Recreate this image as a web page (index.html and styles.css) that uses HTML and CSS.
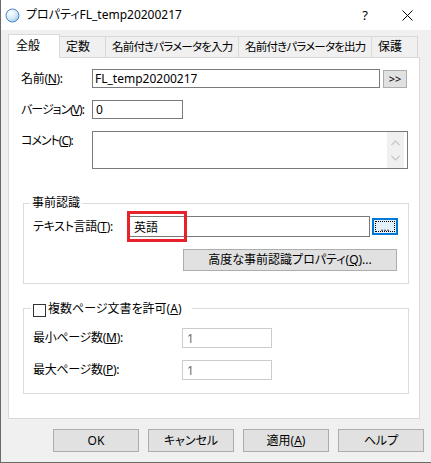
FILE: index.html
```html
<!DOCTYPE html>
<html lang="ja">
<head>
    <meta charset="UTF-8">
    <title>プロパティFL_temp20200217</title>
    <link rel="stylesheet" href="styles.css">
</head>
<body>
    <div class="window">
        <div class="titlebar">
            <svg class="app-icon" width="15" height="15" viewBox="0 0 15 15">
                <defs>
                    <radialGradient id="orb" cx="0.35" cy="0.3" r="0.75">
                        <stop offset="0" stop-color="#ffffff"/>
                        <stop offset="0.6" stop-color="#d6e9f8"/>
                        <stop offset="1" stop-color="#9cc8ee"/>
                    </radialGradient>
                </defs>
                <circle cx="7.5" cy="7.5" r="6.5" fill="url(#orb)" stroke="#4a86c8" stroke-width="1"/>
            </svg>
            <span class="title">プロパティFL_temp20200217</span>
            <span class="caption-btn help">?</span>
            <span class="caption-btn close">
                <svg width="11" height="11" viewBox="0 0 11 11">
                    <path d="M0.5 0.5 L10.5 10.5 M10.5 0.5 L0.5 10.5" stroke="#000" stroke-width="1" fill="none"/>
                </svg>
            </span>
        </div>

        <div class="tabs">
            <div class="tab active" style="width: 52px">全般</div>
            <div class="tab" style="width: 47px">定数</div>
            <div class="tab long" style="width: 134px">名前付きパラメータを入力</div>
            <div class="tab long" style="width: 134px">名前付きパラメータを出力</div>
            <div class="tab" style="width: 47px">保護</div>
        </div>

        <div class="panel">
            <div class="form">
                <div class="row">
                    <label class="label">名前(<u>N</u>):</label>
                    <input class="field name-field" type="text" value="FL_temp20200217" readonly>
                    <button class="btn more-btn">&gt;&gt;</button>
                </div>
                <div class="row">
                    <label class="label narrow">バージョン(<u>V</u>):</label>
                    <input class="field version-field" type="text" value="0" readonly>
                </div>
                <div class="row top">
                    <label class="label comment-label narrow">コメント(<u>C</u>):</label>
                    <div class="field comment-field">
                        <div class="scrollbar">
                            <svg width="9" height="6" viewBox="0 0 9 6"><path d="M0.5 5 L4.5 1 L8.5 5" stroke="#c4c4c4" stroke-width="1.2" fill="none"/></svg>
                            <svg width="9" height="6" viewBox="0 0 9 6"><path d="M0.5 1 L4.5 5 L8.5 1" stroke="#c4c4c4" stroke-width="1.2" fill="none"/></svg>
                        </div>
                    </div>
                </div>
            </div>

            <fieldset class="group recog">
                <legend class="legend">事前認識</legend>
                <div class="row">
                    <label class="label lang-label">テキスト言語(<u>T</u>):</label>
                    <div class="lang-wrap">
                        <input class="field lang-field" type="text" value="英語" readonly>
                        <span class="highlight"></span>
                    </div>
                    <button class="btn dots-btn"><span class="focus-rect">...</span></button>
                </div>
                <button class="btn advanced-btn">高度な事前認識プロパティ(<u>Q</u>)...</button>
            </fieldset>

            <fieldset class="group pages">
                <legend class="legend check-legend">
                    <span class="checkbox"></span>
                    <span>複数ページ文書を許可(<u>A</u>)</span>
                </legend>
                <div class="row">
                    <label class="label page-label">最小ページ数(<u>M</u>):</label>
                    <input class="field page-field" type="text" value="1" disabled>
                </div>
                <div class="row">
                    <label class="label page-label">最大ページ数(<u>P</u>):</label>
                    <input class="field page-field" type="text" value="1" disabled>
                </div>
            </fieldset>
        </div>

        <div class="dialog-buttons">
            <button class="btn dialog-btn">OK</button>
            <button class="btn dialog-btn">キャンセル</button>
            <button class="btn dialog-btn">適用(<u>A</u>)</button>
            <button class="btn dialog-btn">ヘルプ</button>
        </div>
    </div>
</body>
</html>
```

FILE: styles.css
```css
body {
    margin: 0;
    background: #f0f0f0;
    font-family: "Noto Sans", "Noto Sans CJK JP", sans-serif;
    font-size: 12px;
    line-height: 16px;
    color: #000;
    font-feature-settings: "palt";
}
.window {
    width: 431px;
    height: 463px;
    box-sizing: border-box;
    border-left: 1px solid #6b6b6b;
    border-bottom: 1px solid #6b6b6b;
    display: flex;
    flex-direction: column;
}
.titlebar {
    height: 30px;
    background: #fff;
    display: flex;
    align-items: center;
    padding-left: 4px;
}
.app-icon {
    flex: none;
}
.title {
    margin-left: 6px;
}
.caption-btn {
    width: 42px;
    height: 30px;
    display: flex;
    align-items: center;
    justify-content: center;
}
.help {
    margin-left: auto;
    font-size: 13px;
}
.close {
    margin-right: 3px;
}
.tabs {
    display: flex;
    align-items: flex-end;
    height: 23px;
    margin-top: 4px;
    padding-left: 7px;
    position: relative;
    z-index: 1;
}
.tab {
    box-sizing: border-box;
    height: 21px;
    margin-right: -1px;
    padding-left: 6px;
    border: 1px solid #d9d9d9;
    border-bottom: none;
    background: #f0f0f0;
    display: flex;
    align-items: center;
    white-space: nowrap;
    overflow: hidden;
}
.tab.long {
    font-size: 11.5px;
    letter-spacing: -0.8px;
}
.tab.active {
    height: 24px;
    margin-bottom: -1px;
    padding-left: 7px;
    padding-bottom: 2px;
    background: #fff;
}
.panel {
    box-sizing: border-box;
    width: 412px;
    height: 362px;
    margin-left: 7px;
    border: 1px solid #d9d9d9;
    background: #fff;
}
.form {
    padding: 11px 0 0 12px;
}
.row {
    display: flex;
    align-items: center;
}
.row + .row {
    margin-top: 12px;
}
.row.top {
    align-items: flex-start;
}
.label {
    width: 71px;
    flex: none;
    white-space: nowrap;
    letter-spacing: -0.3px;
}
.label.narrow {
    letter-spacing: -1px;
}
.comment-label {
    padding-top: 2px;
}
.field {
    box-sizing: border-box;
    margin: 0;
    border: 1px solid #7a7a7a;
    background: #fff;
    font: inherit;
    font-feature-settings: "palt";
    color: #000;
    padding: 0 3px;
    outline: none;
}
.name-field {
    width: 288px;
    height: 19px;
    padding-left: 2px;
}
.version-field {
    width: 91px;
    height: 19px;
}
.comment-field {
    width: 316px;
    height: 38px;
    display: flex;
    justify-content: flex-end;
}
.scrollbar {
    width: 17px;
    background: #f0f0f0;
    display: flex;
    flex-direction: column;
    align-items: center;
    justify-content: space-between;
    padding: 8px 0 7px;
    box-sizing: border-box;
}
.btn {
    box-sizing: border-box;
    margin: 0;
    padding: 0;
    border: 1px solid #adadad;
    background: #e1e1e1;
    font: inherit;
    font-feature-settings: "palt";
    color: #000;
}
.more-btn {
    width: 24px;
    height: 18px;
    margin-left: 3px;
    font-size: 11px;
    line-height: 14px;
}
.group {
    margin: 0;
    border: 1px solid #dcdcdc;
    width: 386px;
    box-sizing: border-box;
}
.recog {
    margin: 26px 0 0 14px;
    padding: 5px 0 12px 9px;
}
.pages {
    margin: 16px 0 0 14px;
    padding: 11px 0 13px 9px;
}
.legend {
    padding: 0 2px;
    margin-left: -3px;
    line-height: 16px;
}
.check-legend {
    display: flex;
    align-items: center;
    padding-right: 10px;
    margin-left: -2px;
}
.checkbox {
    box-sizing: border-box;
    width: 13px;
    height: 13px;
    border: 1px solid #333;
    background: #fff;
    margin: 4px 2px 0 0;
}
.lang-label {
    width: 95px;
}
.lang-wrap {
    position: relative;
}
.lang-field {
    display: block;
    width: 242px;
    height: 21px;
    padding-left: 5px;
}
.highlight {
    position: absolute;
    left: -1px;
    top: -5px;
    width: 60px;
    height: 31px;
    box-sizing: border-box;
    border: 3px solid #e8222b;
}
.dots-btn {
    width: 26px;
    height: 17px;
    margin-left: 2px;
    border: 2px solid #0078d7;
    background: #e5f1fb;
    display: flex;
    padding: 1px;
}
.focus-rect {
    flex: 1;
    border: 1px dotted #000;
    font-size: 11px;
    line-height: 9px;
    display: flex;
    align-items: flex-end;
    justify-content: center;
}
.advanced-btn {
    display: block;
    width: 214px;
    height: 22px;
    margin: 12px 0 0 150px;
}
.page-label {
    width: 149px;
}
.page-field {
    width: 90px;
    height: 20px;
    border-color: #cccccc;
    color: #6d6d6d;
    padding-left: 4px;
}
.dialog-buttons {
    display: flex;
    justify-content: flex-end;
    gap: 9px;
    margin-top: 10px;
    padding-right: 7px;
}
.dialog-btn {
    width: 86px;
    height: 23px;
}
```
